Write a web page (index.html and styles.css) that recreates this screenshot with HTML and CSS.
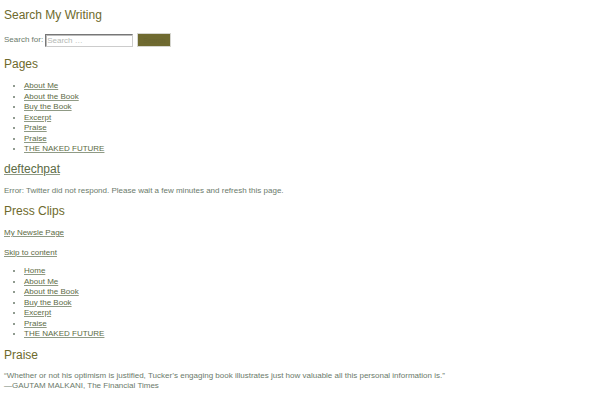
FILE: index.html
```html
<!DOCTYPE html>
<html>
<head>
<meta charset="utf-8">
<link rel="stylesheet" href="styles.css">
</head>
<body>
<aside class="widget widget-search">
  <h2 class="widget-title">Search My Writing</h2>
  <form class="search-form">
    <label class="search-label">Search for:</label>
    <input class="search-field" type="text" placeholder="Search …">
    <button class="search-submit" type="button">Search</button>
  </form>
</aside>
<aside class="widget widget-pages">
  <h2 class="widget-title">Pages</h2>
  <ul class="menu">
    <li><a href="#">About Me</a></li>
    <li><a href="#">About the Book</a></li>
    <li><a href="#">Buy the Book</a></li>
    <li><a href="#">Excerpt</a></li>
    <li><a href="#">Praise</a></li>
    <li><a href="#">Praise</a></li>
    <li><a href="#">THE NAKED FUTURE</a></li>
  </ul>
</aside>
<aside class="widget widget-twitter">
  <h2 class="widget-title"><a href="#">deftechpat</a></h2>
  <p class="text">Error: Twitter did not respond. Please wait a few minutes and refresh this page.</p>
</aside>
<aside class="widget">
  <h2 class="widget-title">Press Clips</h2>
  <p class="text"><a href="#">My Newsle Page</a></p>
</aside>
<p class="text skip"><a href="#">Skip to content</a></p>
<ul class="menu main-menu">
  <li><a href="#">Home</a></li>
  <li><a href="#">About Me</a></li>
  <li><a href="#">About the Book</a></li>
  <li><a href="#">Buy the Book</a></li>
  <li><a href="#">Excerpt</a></li>
  <li><a href="#">Praise</a></li>
  <li><a href="#">THE NAKED FUTURE</a></li>
</ul>
<article class="entry">
  <h2 class="widget-title">Praise</h2>
  <p class="text">“Whether or not his optimism is justified, Tucker’s engaging book illustrates just how valuable all this personal information is.”<br>—GAUTAM MALKANI, The Financial Times</p>
</article>
</body>
</html>
```
FILE: styles.css
```css
html, body {
  margin: 0;
  padding: 0;
  background: #ffffff;
}
body {
  padding: 8px 4px 0 4px;
  font-family: "Liberation Sans", Arial, sans-serif;
  font-size: 8px;
  line-height: 10.5px;
  color: #6b7a6b;
}
a {
  color: #5c6b45;
  text-decoration: underline;
  text-decoration-color: #8f9a85;
}
.widget-title {
  margin: 0 0 10px 0;
  font-size: 12px;
  line-height: 14px;
  font-weight: normal;
  color: #6e6a2c;
}
.widget-title a {
  color: #5c6b45;
}
.widget {
  margin: 0;
}
.widget-search {
  margin-bottom: 10px;
}
.search-form {
  display: flex;
  align-items: center;
  height: 14px;
  margin-top: 11px;
}
.search-label {
  margin-right: 2px;
}
.search-field {
  box-sizing: border-box;
  width: 88px;
  height: 13px;
  padding: 0 1px;
  margin: 0 4px 0 0;
  font-family: "Liberation Sans", Arial, sans-serif;
  font-size: 8px;
  border: 1px solid #cccccc;
  border-top-color: #777777;
  border-left-color: #777777;
  box-shadow: inset 1px 1px 0 #bbbbbb;
  background: #fff;
}
.search-field::placeholder {
  color: #b5b9b5;
}
.search-submit {
  box-sizing: border-box;
  width: 34px;
  height: 14px;
  padding: 0;
  font-family: "Liberation Sans", Arial, sans-serif;
  font-size: 7px;
  color: #6a6630;
  background: #6f6a30;
  border: 1px solid #d6d6d0;
}
.widget-search .widget-title {
  margin-bottom: 0;
}
.menu {
  margin: 0;
  padding: 0 0 0 20px;
}
.widget-pages .menu {
  margin-bottom: 7px;
}
.main-menu {
  margin-bottom: 8px;
}
.menu li {
  line-height: 10.5px;
}
.text {
  margin: 0 0 9px 0;
}
.widget-twitter .text {
  margin-bottom: 8px;
}
.skip {
  margin-bottom: 8px;
}
.entry .widget-title {
  margin-bottom: 9px;
}
```
